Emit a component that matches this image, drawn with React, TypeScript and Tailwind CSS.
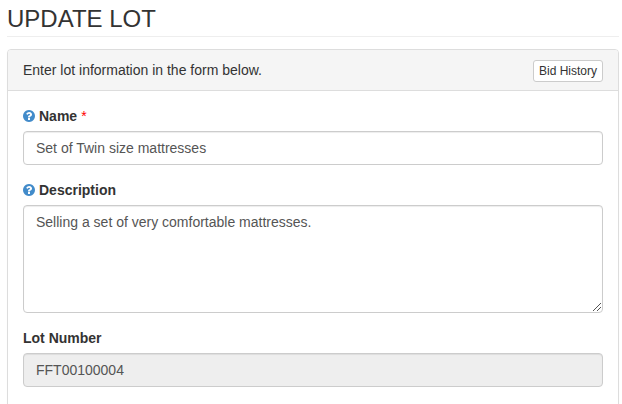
import React from "react";

interface FieldProps {
  id: string;
  label: string;
  help?: boolean;
  required?: boolean;
  children: React.ReactNode;
}

const HelpIcon = () => {
  return (
    <svg viewBox="128 128 1536 1536" className="size-3 fill-[#428bca]">
      <path d="M1024 1376v-192q0-14-9-23t-23-9h-192q-14 0-23 9t-9 23v192q0 14 9 23t23 9h192q14 0 23-9t9-23zm256-672q0-88-55.5-163t-138.5-116-170-41q-243 0-371 213-15 24 8 42l132 100q7 6 19 6 16 0 25-12 53-68 86-92 34-24 86-24 48 0 85.5 26t37.500 59q0 38-20 61t-68 45q-63 28-115.500 86.500t-52.500 125.500v36q0 14 9 23t23 9h192q14 0 23-9t9-23q0-19 21.500-49.500t54.500-49.500q32-18 49-28.500t46-35 44.500-48 28-60.500 12.500-81zm384 192q0 209-103 385.500t-279.500 279.500-385.500 103-385.500-103-279.500-279.500-103-385.500 103-385.500 279.500-279.500 385.500-103 385.500 103 279.500 279.500 103 385.500z" />
    </svg>
  );
};

const ResizeGrip = () => {
  return (
    <svg
      viewBox="0 0 8 8"
      shapeRendering="crispEdges"
      className="pointer-events-none absolute right-0.5 bottom-0.5 size-2 fill-[#555]"
    >
      <path d="M0 7h1v1H0zM1 6h1v1H1zM2 5h1v1H2zM3 4h1v1H3zM4 3h1v1H4zM5 2h1v1H5zM6 1h1v1H6zM7 0h1v1H7z" />
      <path d="M4 7h1v1H4zM5 6h1v1H5zM6 5h1v1H6zM7 4h1v1H7z" />
    </svg>
  );
};

const Field = ({ id, label, help, required, children }: FieldProps) => {
  return (
    <div className="mb-[15px]">
      <label
        htmlFor={id}
        className="mb-[5px] flex h-5 items-center gap-1 font-bold text-[#333]"
      >
        {help && <HelpIcon />}
        <span>{label}</span>
        {required && <span className="font-normal text-[#f00]">*</span>}
      </label>
      {children}
    </div>
  );
};

const controlStyles =
  "block w-full rounded border border-[#ccc] px-3 py-1.5 text-sm leading-5 text-[#555] shadow-[inset_0_1px_1px_rgba(0,0,0,0.075)] outline-none";

const App = () => {
  return (
    <div className="h-[404px] overflow-hidden bg-white pl-[7px] pr-[3px] font-['Liberation_Sans',Arial,sans-serif] text-sm leading-5 text-[#333]">
      <h1 className="h-[37px] border-b border-[#eee] pt-[6px] text-2xl leading-[26px]">
        UPDATE LOT
      </h1>
      <div className="mt-3 h-[400px] rounded border border-[#ddd] shadow-[0_1px_1px_rgba(0,0,0,0.05)]">
        <div className="flex h-[41px] items-center justify-between rounded-t-[3px] border-b border-[#ddd] bg-[#f5f5f5] px-[15px]">
          <span>Enter lot information in the form below.</span>
          <button className="mt-px h-[22px] rounded-[3px] border border-[#ccc] bg-white px-[5px] text-xs leading-[18px]">
            Bid History
          </button>
        </div>
        <form className="p-[15px]">
          <Field id="name" label="Name" help required>
            <input
              id="name"
              className={`${controlStyles} h-[34px] bg-white`}
              defaultValue="Set of Twin size mattresses"
            />
          </Field>
          <Field id="description" label="Description" help>
            <div className="relative">
              <textarea
                id="description"
                spellCheck={false}
                className={`${controlStyles} h-[108px] resize-none bg-white`}
                defaultValue="Selling a set of very comfortable mattresses."
              />
              <ResizeGrip />
            </div>
          </Field>
          <Field id="lot-number" label="Lot Number">
            <input
              id="lot-number"
              className={`${controlStyles} h-[34px] bg-[#eee]`}
              defaultValue="FFT00100004"
              readOnly
            />
          </Field>
        </form>
      </div>
    </div>
  );
};

export default App;
